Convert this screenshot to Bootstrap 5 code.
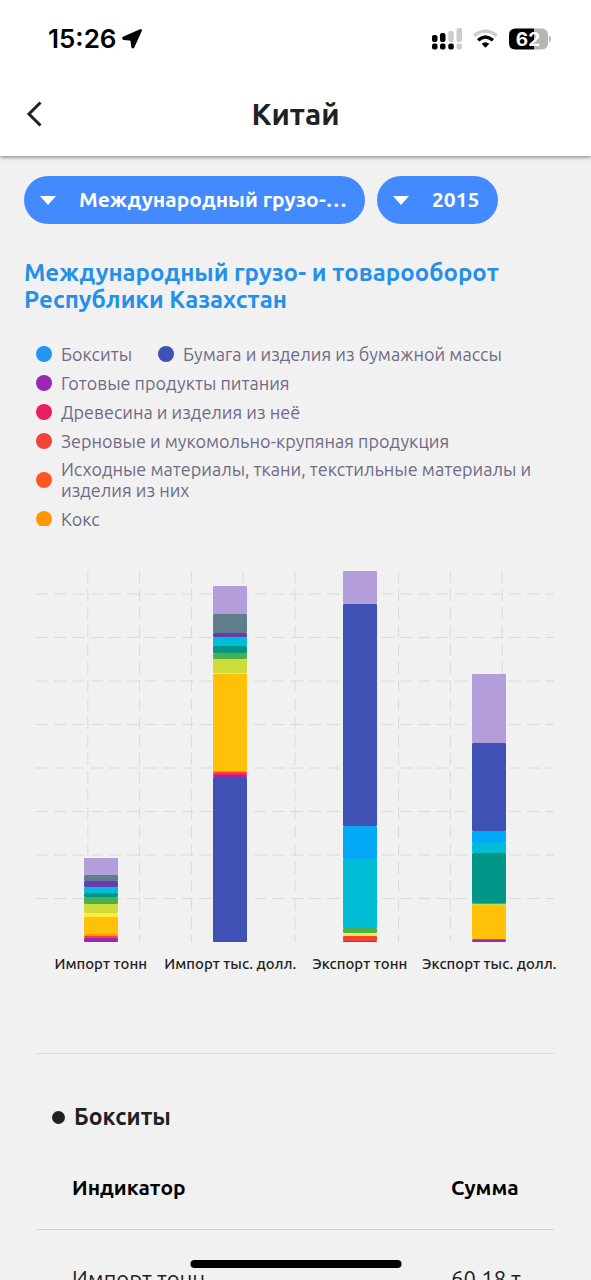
<!DOCTYPE html>
<html lang="ru">
<head>
<meta charset="utf-8">
<meta name="viewport" content="width=device-width, initial-scale=1">
<title>Китай</title>
<link href="https://cdn.jsdelivr.net/npm/bootstrap@5.3.0/dist/css/bootstrap.min.css" rel="stylesheet">
<style>
  body { font-family: Ubuntu, "Noto Sans", sans-serif; background: #f1f1f1; color: #212121; }
  .status-bar { height: 72px; padding: 6px 40px 0 48px; color: #000; }
  .clock { font: 600 26px/32px Inter, sans-serif; }
  .clock-group { gap: 6px; }
  .status-icons { gap: 11px; }
  .app-header { box-shadow: 0 1px 4px rgba(0,0,0,.5); z-index: 2; }
  .title-bar { height: 84px; grid-template-columns: 72px 1fr 72px; }
  .title-bar h1 { font-size: 30px; line-height: 36px; font-weight: 600; color: #212121; }
  .back-btn { width: 72px; height: 56px; padding: 0 0 0 24px; }
  .scroller { overflow-y: auto; scrollbar-width: none; padding: 20px 24px 0; }
  .scroller::-webkit-scrollbar { display: none; }
  .chip { position: relative; }
  .chip svg { position: absolute; left: 16px; top: 20px; pointer-events: none; }
  .chip select { appearance: none; height: 48px; border: 0; border-radius: 24px; background: #448aff; color: #fff; font-size: 21px; font-weight: 600; padding: 0 18px 0 55px; }
  .chip-wide select { width: 341px; }
  .chip-year select { width: 121px; }
  .report-title { font-size: 24px; line-height: 27px; font-weight: 600; color: #2490ea; margin: 35px 0 30px; }
  .legend-list { max-height: 183px; overflow: hidden; gap: 7px 26px; margin: 0 0 45px; padding: 0 0 0 12px; font-size: 18px; line-height: 21px; color: #6f6b87; }
  .legend-list li { gap: 9px; min-height: 22px; }
  .swatch { flex: none; width: 16px; height: 16px; border-radius: 50%; }
  .chart { margin: 0 13px 0 12px; }
  .plot { height: 371px; position: relative; }
  .grid-lines { position: absolute; inset: 0; width: 100%; height: 100%; }
  .grid-lines line { stroke: #dadada; stroke-width: 1; stroke-dasharray: 12 6.2; }
  .stack { width: 26%; position: relative; }
  .stack div { border-radius: 1px; }
  .axis-labels { font-size: 15px; line-height: 20px; font-weight: 500; margin-top: 12px; }
  .data-block { margin: 79px 13px 0 12px; border-top: 1px solid #dedede; }
  .data-block h3 { font-size: 23px; line-height: 28px; font-weight: 700; margin: 49px 0 0 16px; gap: 9px; }
  .bullet { width: 13px; height: 13px; border-radius: 50%; background: #212121; }
  .data-table { width: 100%; margin-top: 14px; color: #000; font-size: 22px; line-height: 28px; }
  .data-table th { font-size: 21px; font-weight: 600; height: 84px; }
  .data-table tr { border-bottom: 1px solid #d3d3d3; }
  .data-table td { height: 100px; color: #212121; }
  .data-table th:first-child, .data-table td:first-child { padding-left: 36px; }
  .data-table th:last-child, .data-table td:last-child { width: 104px; white-space: nowrap; }
  .home-bar { bottom: 12px; width: 211px; height: 8px; border-radius: 4px; background: #000; z-index: 3; }
</style>
</head>
<body>
<div class="d-flex flex-column vh-100 overflow-hidden position-relative">
  <header class="app-header bg-white position-relative flex-shrink-0">
    <div class="status-bar d-flex align-items-center justify-content-between">
      <div class="clock-group d-flex align-items-center">
        <span class="clock">15:26</span>
        <svg width="20" height="20" viewBox="0 0 20 20" aria-hidden="true"><path d="M18 .3Q20.600-.4 19.800 2L12.300 18.500Q10.600 20.800 9.300 18.300L8.600 12.200Q8.500 11.500 7.800 11.400L1.600 11Q-.9 9.800 1 7.700Z"/></svg>
      </div>
      <div class="status-icons d-flex align-items-center">
        <svg width="30" height="22" viewBox="0 0 30 22" aria-hidden="true">
          <g fill="#000"><rect x="0" y="7" width="5.500" height="7" rx="2"/><rect x="8" y="5" width="5.500" height="9" rx="2"/><rect x="0" y="15.500" width="5.500" height="6" rx="2"/><rect x="8" y="15.500" width="5.500" height="6" rx="2"/><rect x="16.300" y="15.500" width="5.500" height="6" rx="2"/></g>
          <g fill="#ccc"><rect x="16.300" y="3" width="5.500" height="11" rx="2"/><rect x="24.500" y="0" width="5.500" height="14" rx="2"/><rect x="24.500" y="15.500" width="5.500" height="6" rx="2"/></g>
        </svg>
        <svg width="25" height="20" viewBox="0 0 26 20" aria-hidden="true" fill="none">
          <path d="M1.300 6.500Q13-3 24.700 6.500" stroke="#ccc" stroke-width="3.400"/>
          <path d="M5.300 11.300Q13 4.700 20.700 11.300" stroke="#000" stroke-width="3.600"/>
          <path d="M9 15Q13 11.500 17 15L13 19Z" fill="#000"/>
        </svg>
        <svg width="42" height="22" viewBox="0 0 42 22" role="img" aria-label="62%">
          <path d="M25 .5V21.500H6.500Q0 21.500 0 15V7Q0 .5 6.500 .5Z" fill="#000"/>
          <path d="M25 .5H32.500Q39 .5 39 7V15Q39 21.500 32.500 21.500H25Z" fill="#b5b5b5"/>
          <path d="M40 7.500Q42 8.500 42 11T40 14.500Z" fill="#b5b5b5"/>
          <text x="19" y="18" text-anchor="middle" font-family="Inter, sans-serif" font-size="19" font-weight="700" fill="#fff">62</text>
        </svg>
      </div>
    </div>
    <div class="title-bar d-grid align-items-center">
      <button class="back-btn btn border-0 text-start" type="button" aria-label="Назад">
        <svg width="22" height="26" viewBox="0 0 22 26" fill="none" stroke="#212121" stroke-width="3"><path d="M16.500 1.500L5 13L16.500 24.500"/></svg>
      </button>
      <h1 class="text-center m-0">Китай</h1>
    </div>
  </header>

  <main class="scroller flex-grow-1">
    <div class="d-flex gap-2">
      <div class="chip chip-wide me-1">
        <select aria-label="Показатель"><option>Международный грузо-…</option></select>
        <svg width="16" height="9" viewBox="0 0 16 9" aria-hidden="true"><path d="M0 0H16L8 9Z" fill="#fff"/></svg>
      </div>
      <div class="chip chip-year">
        <select aria-label="Год"><option>2015</option></select>
        <svg width="16" height="9" viewBox="0 0 16 9" aria-hidden="true"><path d="M0 0H16L8 9Z" fill="#fff"/></svg>
      </div>
    </div>

    <h2 class="report-title">Международный грузо- и товарооборот<br>Республики Казахстан</h2>

    <ul class="legend-list list-unstyled d-flex flex-wrap" id="legend"></ul>

    <section class="chart" aria-label="Диаграмма">
      <div class="plot">
        <svg class="grid-lines" id="grid" aria-hidden="true"></svg>
        <div class="row g-0 h-100" id="bars"></div>
      </div>
      <div class="axis-labels row g-0 flex-nowrap" id="labels"></div>
    </section>

    <section class="data-block">
      <h3 class="d-flex align-items-center"><span class="bullet"></span>Бокситы</h3>
      <table class="data-table">
        <thead><tr><th scope="col">Индикатор</th><th scope="col">Сумма</th></tr></thead>
        <tbody><tr><td>Импорт тонн</td><td>60.18 т</td></tr></tbody>
      </table>
    </section>
  </main>
  <div class="home-bar position-absolute start-50 translate-middle-x"></div>
</div>

<script src="https://cdn.jsdelivr.net/npm/bootstrap@5.3.0/dist/js/bootstrap.bundle.min.js"></script>
<script>
  const color = {
    blue: '#2196f3', indigo: '#3f51b5', purple: '#9c27b0', pink: '#e91e63', red: '#f44336',
    deepOrange: '#ff5722', orange: '#ff9800', amber: '#ffc107', yellow: '#ffeb3b', lime: '#cddc39',
    green: '#4caf50', teal: '#009688', cyan: '#00bcd4', lightBlue: '#03a9f4',
    deepPurple: '#673ab7', slate: '#607d8b', lavender: '#b39ddb'
  };
  const legend = [
    ['blue', 'Бокситы'], ['indigo', 'Бумага и изделия из бумажной массы'],
    ['purple', 'Готовые продукты питания'], ['pink', 'Древесина и изделия из неё'],
    ['red', 'Зерновые и мукомольно-крупяная продукция'],
    ['deepOrange', 'Исходные материалы, ткани, текстильные материалы и изделия из них'],
    ['orange', 'Кокс']
  ];
  // Segments run from the top of each bar down to the axis.
  const max = 371;
  const series = [
    ['Импорт тонн', [['lavender', 17.5], ['slate', 6], ['deepPurple', 6], ['cyan', 5.5], ['teal', 4], ['green', 7], ['lime', 9], ['yellow', 4.5], ['amber', 16.5], ['orange', 2.5], ['red', 2], ['purple', 4]]],
    ['Импорт тыс. долл.', [['lavender', 28], ['slate', 19], ['deepPurple', 4], ['cyan', 9.5], ['teal', 6.5], ['green', 6.5], ['lime', 13.5], ['yellow', 1.5], ['amber', 97], ['orange', 1], ['red', 1.5], ['pink', 1], ['purple', 2], ['indigo', 165.5]]],
    ['Экспорт тонн', [['lavender', 33], ['indigo', 221.5], ['lightBlue', 33], ['cyan', 69], ['green', 5.5], ['yellow', 3], ['red', 5], ['purple', 1]]],
    ['Экспорт тыс. долл.', [['lavender', 69], ['indigo', 88], ['lightBlue', 12], ['cyan', 9.5], ['teal', 50], ['green', 1], ['lime', 1], ['amber', 34.5], ['red', 1], ['purple', 2]]]
  ];
  document.getElementById('legend').innerHTML = legend.map(([c, t]) =>
    `<li class="d-flex align-items-center"><span class="swatch" style="background:${color[c]}"></span><span>${t}</span></li>`).join('');
  document.getElementById('bars').innerHTML = series.map(([, segs]) =>
    `<div class="col h-100 d-flex justify-content-center"><div class="stack h-100 d-flex flex-column justify-content-end">` +
    segs.map(([c, v]) => `<div style="height:${v / max * 100}%;background:${color[c]}"></div>`).join('') + `</div></div>`).join('');
  document.getElementById('labels').innerHTML = series.map(([t]) =>
    `<div class="col-3 d-flex justify-content-center text-nowrap"><span>${t}</span></div>`).join('');
  let lines = '';
  for (let i = 1; i <= 9; i++) lines += `<line x1="${i * 10}%" x2="${i * 10}%" y1="0" y2="100%"/>`;
  for (let i = 1; i <= 8; i++) { const y = 100 - i * 43.5 / max * 100; lines += `<line x1="0" x2="100%" y1="${y}%" y2="${y}%"/>`; }
  document.getElementById('grid').innerHTML = lines;
</script>
</body>
</html>
